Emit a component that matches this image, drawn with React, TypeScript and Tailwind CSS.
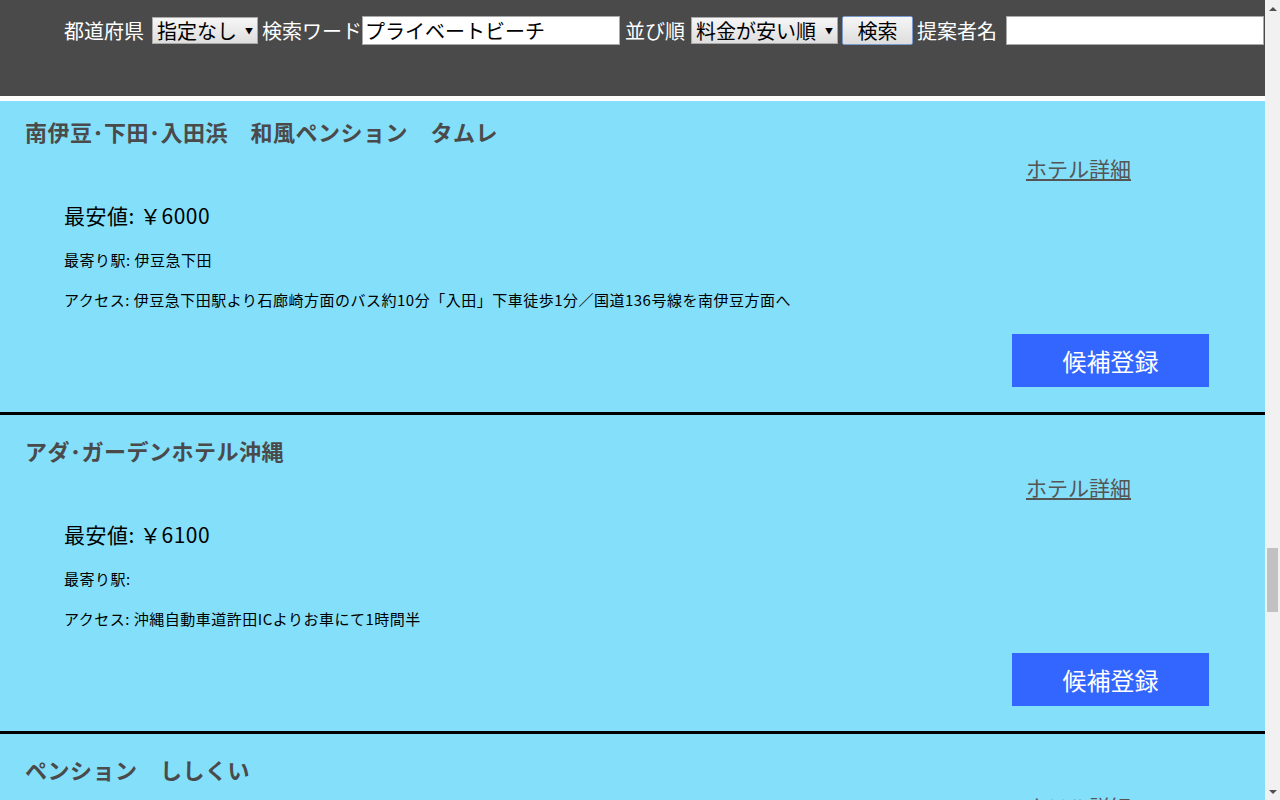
type Hotel = {
  name: string;
  price: number;
  station: string;
  access: string;
};

const HOTELS: Hotel[] = [
  {
    name: '南伊豆･下田･入田浜　和風ペンション　タムレ',
    price: 6000,
    station: '伊豆急下田',
    access: '伊豆急下田駅より石廊崎方面のバス約10分「入田」下車徒歩1分／国道136号線を南伊豆方面へ',
  },
  {
    name: 'アダ･ガーデンホテル沖縄',
    price: 6100,
    station: '',
    access: '沖縄自動車道許田ICよりお車にて1時間半',
  },
  {
    name: 'ペンション　ししくい',
    price: 6300,
    station: '',
    access: '',
  },
];

const FONT = "font-['Noto_Sans_CJK_JP','Noto_Sans',sans-serif]";

function FakeSelect({ label, width }: { label: string; width: string }) {
  return (
    <div
      className={`${width} h-[27px] flex items-center justify-between pl-[4px] pr-[4px] border border-[#a9a9a9] bg-gradient-to-b from-[#f6f6f6] to-[#dedede] text-black text-[20px] leading-none`}
    >
      <span>{label}</span>
      <span className="text-[8px]">▼</span>
    </div>
  );
}

function SearchBar() {
  return (
    <header className="shrink-0 h-[101px] bg-[#4a4a4a] border-b-[5px] border-white">
      <div className="flex items-center pt-[16px] pl-[64px] text-white text-[20px] leading-none whitespace-nowrap">
        <span>都道府県</span>
        <div className="ml-[8px]">
          <FakeSelect label="指定なし" width="w-[106px]" />
        </div>
        <span className="ml-[4px]">検索ワード</span>
        <input
          readOnly
          value="プライベートビーチ"
          className="w-[258px] h-[29px] px-[2px] bg-white border border-[#a9a9a9] text-black text-[20px] outline-none"
        />
        <span className="ml-[5px]">並び順</span>
        <div className="ml-[6px]">
          <FakeSelect label="料金が安い順" width="w-[147px]" />
        </div>
        <button className="ml-[4px] w-[71px] h-[29px] border border-[#7a9ad0] rounded-[2px] bg-gradient-to-b from-[#f6f6f6] to-[#dddddd] text-black text-[20px]">
          検索
        </button>
        <span className="ml-[4px]">提案者名</span>
        <input
          readOnly
          value=""
          className="ml-[9px] w-[258px] h-[29px] bg-white border border-[#a9a9a9] outline-none"
        />
      </div>
    </header>
  );
}

function HotelCard({ hotel, first }: { hotel: Hotel; first: boolean }) {
  return (
    <section
      className={`shrink-0 bg-[#84dffa] border-b-[3px] border-black ${
        first ? 'h-[314px] pt-[15px]' : 'h-[319px] pt-[20px]'
      }`}
    >
      <h2 className="pl-[25px] text-[22px] leading-[30px] font-bold tracking-[0.5px] text-[#4a4a4a]">
        {hotel.name}
      </h2>
      <div className="mt-[8px] flex justify-end pr-[134px]">
        <a href="#" className="text-[21px] leading-[28px] text-[#555555] underline">
          ホテル詳細
        </a>
      </div>
      <div className="pl-[64px] text-black">
        <p className="mt-[19px] text-[21px] leading-[28px] tracking-[0.5px]">最安値: ￥{hotel.price}</p>
        <p className="mt-[21px] text-[15px] leading-[20px] tracking-[0.5px]">最寄り駅: {hotel.station}</p>
        <p className="mt-[20px] text-[15px] leading-[20px] tracking-[0.5px]">アクセス: {hotel.access}</p>
      </div>
      <div className="mt-[24px] flex justify-end pr-[56px]">
        <button className="w-[197px] h-[53px] bg-[#3366ff] text-white text-[24px]">候補登録</button>
      </div>
    </section>
  );
}

function ScrollBar() {
  return (
    <div className="w-[15px] shrink-0 h-full bg-[#f1f1f1] flex flex-col items-center">
      <div className="h-[17px] flex items-center justify-center">
        <div className="w-0 h-0 border-l-[4px] border-r-[4px] border-b-[4px] border-l-transparent border-r-transparent border-b-[#505050]" />
      </div>
      <div className="h-[531px]" />
      <div className="w-[11px] h-[64px] bg-[#c1c1c1]" />
      <div className="flex-1" />
      <div className="h-[17px] flex items-center justify-center">
        <div className="w-0 h-0 border-l-[4px] border-r-[4px] border-t-[4px] border-l-transparent border-r-transparent border-t-[#505050]" />
      </div>
    </div>
  );
}

export default function App() {
  return (
    <div className={`${FONT} flex h-[800px] w-[1280px] overflow-hidden`}>
      <div className="flex-1 flex flex-col overflow-hidden bg-[#84dffa]">
        <SearchBar />
        <main className="flex flex-col">
          {HOTELS.map((h, i) => (
            <HotelCard key={i} hotel={h} first={i === 0} />
          ))}
        </main>
      </div>
      <ScrollBar />
    </div>
  );
}
